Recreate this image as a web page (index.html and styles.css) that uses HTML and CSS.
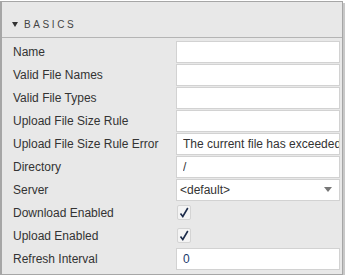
FILE: index.html
```html
<!DOCTYPE html>
<html lang="en">
<head>
    <meta charset="UTF-8">
    <title>Basics</title>
    <link rel="stylesheet" href="styles.css">
</head>
<body>
    <div class="panel">
        <div class="panel-header">
            <span class="caret"></span>BASICS
        </div>
        <div class="props">
            <div class="row">
                <span class="label">Name</span>
                <input class="field" type="text" value="">
            </div>
            <div class="row">
                <span class="label">Valid File Names</span>
                <input class="field" type="text" value="">
            </div>
            <div class="row">
                <span class="label">Valid File Types</span>
                <input class="field" type="text" value="">
            </div>
            <div class="row">
                <span class="label">Upload File Size Rule</span>
                <input class="field" type="text" value="">
            </div>
            <div class="row">
                <span class="label">Upload File Size Rule Error</span>
                <input class="field" type="text" value="The current file has exceeded the maximum size">
            </div>
            <div class="row">
                <span class="label">Directory</span>
                <input class="field" type="text" value="/">
            </div>
            <div class="row">
                <span class="label">Server</span>
                <div class="field select">
                    <span>&lt;default&gt;</span>
                    <span class="arrow"></span>
                </div>
            </div>
            <div class="row">
                <span class="label">Download Enabled</span>
                <span class="check">
                    <svg width="10" height="11" viewBox="0 0 10 11"><path d="M1.5 6.5 L3.8 9.5 L8.8 1" fill="none" stroke="#1c2b4a" stroke-width="1.6"/></svg>
                </span>
            </div>
            <div class="row">
                <span class="label">Upload Enabled</span>
                <span class="check">
                    <svg width="10" height="11" viewBox="0 0 10 11"><path d="M1.5 6.5 L3.8 9.5 L8.8 1" fill="none" stroke="#1c2b4a" stroke-width="1.6"/></svg>
                </span>
            </div>
            <div class="row">
                <span class="label">Refresh Interval</span>
                <input class="field num" type="text" value="0">
            </div>
        </div>
    </div>
</body>
</html>
```

FILE: styles.css
```css
body {
    margin: 0;
    background: #fff;
    font-family: "Liberation Sans", Arial, sans-serif;
}

/* Panel */
.panel {
    width: 343px;
    height: 274px;
    margin-top: 1px;
    box-sizing: border-box;
    background: #e8e8e8;
    border: 1px solid #a6a6a6;
    border-left-width: 2px;
    box-shadow: 2px 2px 0 #c8c8c8;
}

.panel-header {
    height: 35px;
    box-sizing: border-box;
    margin-top: 1px;
    padding: 16px 0 0 10px;
    border-bottom: 1px solid #b4b4b4;
    font-size: 10px;
    letter-spacing: 2.6px;
    color: #444;
}

.caret {
    display: inline-block;
    width: 0;
    height: 0;
    margin: 0 6px 1px 0;
    border-left: 3.5px solid transparent;
    border-right: 3.5px solid transparent;
    border-top: 5px solid #333;
    vertical-align: middle;
}

/* Rows */
.props {
    padding-top: 2px;
}

.row {
    display: flex;
    align-items: center;
    height: 23px;
}

.label {
    width: 163px;
    padding-left: 11px;
    font-size: 12px;
    color: #333;
}

.field {
    width: 164px;
    height: 22px;
    box-sizing: border-box;
    margin: 0;
    padding: 0 0 0 6px;
    border: 1px solid #d2d2d2;
    background: #fff;
    font-family: inherit;
    font-size: 12px;
    color: #333;
    outline: none;
}

.field.num {
    color: #1a3a6a;
}

.select {
    display: flex;
    align-items: center;
    justify-content: space-between;
    padding: 0 7px 0 3px;
}

.arrow {
    width: 0;
    height: 0;
    border-left: 4px solid transparent;
    border-right: 4px solid transparent;
    border-top: 5px solid #777;
}

.check {
    display: inline-flex;
    align-items: center;
    justify-content: center;
    width: 12px;
    height: 13px;
    margin-left: 1px;
    border: 1px solid #d4d4d4;
    border-radius: 2px;
    background: #f4f4f4;
}
```
